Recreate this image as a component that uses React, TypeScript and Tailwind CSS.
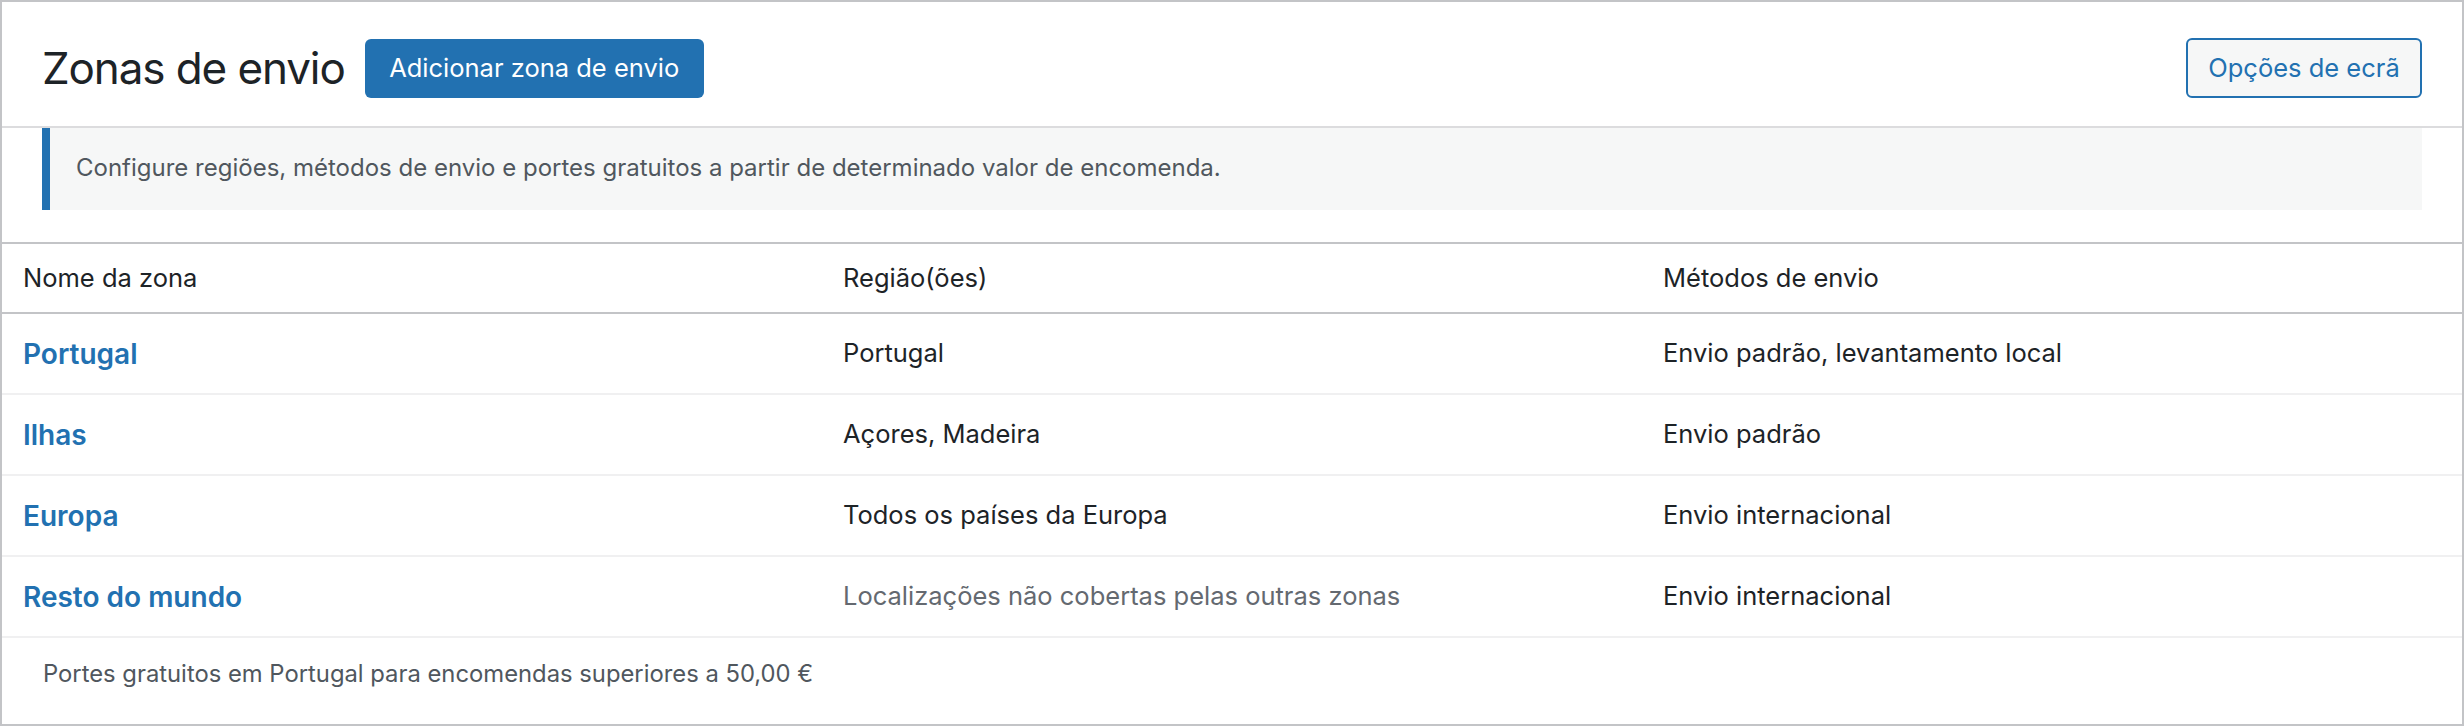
const zones = [
  {
    name: "Portugal",
    regions: "Portugal",
    methods: "Envio padrão, levantamento local",
    muted: false,
  },
  { name: "Ilhas", regions: "Açores, Madeira", methods: "Envio padrão", muted: false },
  {
    name: "Europa",
    regions: "Todos os países da Europa",
    methods: "Envio internacional",
    muted: false,
  },
  {
    name: "Resto do mundo",
    regions: "Localizações não cobertas pelas outras zonas",
    methods: "Envio internacional",
    muted: true,
  },
];

export default function App() {
  return (
    <div
      className="w-[2464px] h-[726px] bg-white border-2 border-[#c3c4c7] text-[#1d2327] flex flex-col"
      style={{ fontFamily: "Inter, 'Noto Sans', sans-serif" }}
    >
      {/* Header */}
      <div className="h-[126px] shrink-0 border-b-2 border-[#dcdcde] px-[40px] pt-[8px] flex items-center justify-between">
        <div className="flex items-center">
          <h1 className="text-[44px] font-normal leading-none tracking-[-1.1px] text-[#1d2327]">
            Zonas de envio
          </h1>
          <button className="ml-[20px] w-[339px] h-[59px] rounded-[6px] bg-[#2271b1] text-white text-[25.5px] flex items-center justify-center">
            Adicionar zona de envio
          </button>
        </div>
        <button className="w-[236px] h-[60px] rounded-[6px] border-2 border-[#2271b1] bg-[#f6f7f7] text-[#2271b1] text-[25.5px] flex items-center justify-center">
          Opções de ecrã
        </button>
      </div>

      {/* Notice */}
      <div className="px-[40px] pb-[32px] shrink-0">
        <div className="h-[82px] bg-[#f6f7f7] border-l-[8px] border-[#2271b1] pl-[26px] pb-[3px] flex items-center text-[24px] text-[#50575e]">
          Configure regiões, métodos de envio e portes gratuitos a partir de determinado valor de encomenda.
        </div>
      </div>

      {/* Table */}
      <div className="border-t-2 border-[#c3c4c7] flex flex-col flex-1">
        <div className="h-[70px] shrink-0 grid grid-cols-3 border-b-2 border-[#c3c4c7] text-[25.5px] text-[#1d2327]">
          <div className="pl-[21px] flex items-center">Nome da zona</div>
          <div className="pl-[21px] flex items-center">Região(ões)</div>
          <div className="pl-[21px] flex items-center">Métodos de envio</div>
        </div>
        {zones.map((zone) => (
          <div
            key={zone.name}
            className="h-[81px] shrink-0 grid grid-cols-3 border-b-2 border-[#f0f0f1] text-[25.5px]"
          >
            <div className="pl-[21px] flex items-center">
              <a className="text-[28px] font-semibold text-[#2271b1]">{zone.name}</a>
            </div>
            <div
              className={
                zone.muted
                  ? "pl-[21px] flex items-center text-[#646970]"
                  : "pl-[21px] flex items-center text-[#1d2327]"
              }
            >
              {zone.regions}
            </div>
            <div className="pl-[21px] flex items-center text-[#1d2327]">{zone.methods}</div>
          </div>
        ))}
        <div className="flex-1 px-[41px] pb-[14px] flex items-center text-[23.8px] text-[#50575e]">
          Portes gratuitos em Portugal para encomendas superiores a 50,00 €
        </div>
      </div>
    </div>
  );
}
